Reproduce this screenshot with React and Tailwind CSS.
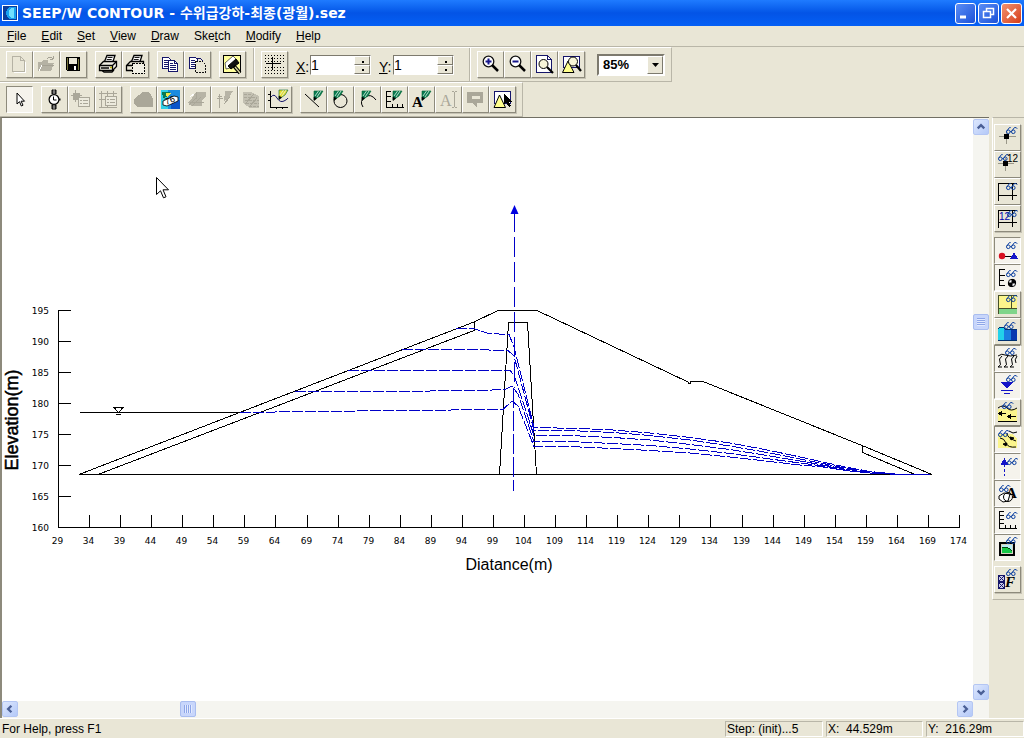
import { useState } from 'react'

// ---------- shared icon bits ----------

function Glyph({ children }) {
  return (
    <svg width="21" height="21" viewBox="0 0 21 21" fill="none" stroke="#000" shapeRendering="crispEdges" className="block shrink-0" aria-hidden="true">
      {children}
    </svg>
  )
}

// the little pair of spectacles that marks every "view" toggle
function Specs({ x = 9, y = 0 }) {
  return (
    <g transform={`translate(${x} ${y})`} stroke="#0b3fa0" strokeWidth="1" fill="none" shapeRendering="auto">
      <ellipse cx="2.3" cy="4.8" rx="1.8" ry="1.8" />
      <ellipse cx="7.3" cy="4.8" rx="1.8" ry="1.8" />
      <path d="M.6 4.4 3.400.6h1.300M5.600 4.400 8.400.6h1.800l1 1.200M4.100 4.600h1.400" />
    </g>
  )
}

function Pencil({ x = 0, y = 0, color = '#0a7a50' }) {
  return (
    <g transform={`translate(${x} ${y})`} shapeRendering="auto">
      <path d="M0 0h9L6 5 0 9Z" fill={color} stroke="#063" strokeWidth=".6" />
      <path d="m1 5 3.500-5M3 6l4-6" stroke="#dff5e6" strokeWidth=".8" />
      <path d="M0 9.500V6l2.500 1.600Z" fill="#000" stroke="#000" strokeWidth=".6" />
    </g>
  )
}

const icons = {
  newFile: (
    <g stroke="#b5b2a4">
      <path d="M3.500 2.500h8l4 4v11h-12zM11.500 2.500v4h4" />
      <path d="M4.500 18.500h12v-11" stroke="#fff" />
    </g>
  ),
  open: (
    <g>
      <path d="M2 8h4l1-2h5v3h6l-3 8H2z" fill="#b5b2a4" stroke="none" />
      <path d="M11 5q3-4 6 0m0 0v-3m0 3h-3M5 11.500h13" stroke="#a5a294" />
      <path d="m3 17 3-6" stroke="#fff" />
    </g>
  ),
  save: (
    <g>
      <path d="M3 3h14v14H4l-1-1z" fill="#000" stroke="none" />
      <path d="M6 4h8v6H6z" fill="#e9e6d6" stroke="none" />
      <path d="M4.500 4v12M15.500 5v11" stroke="#77753a" />
      <path d="M11 12h2v4h-2z" fill="#fff" stroke="none" />
    </g>
  ),
  print: (
    <g shapeRendering="auto" strokeWidth="1.300">
      <path d="M6.500 7.500 9 1.500h8l-2 6" fill="#fff" />
      <path d="M9.500 3.500h5M8.700 5.500h5" strokeWidth=".9" />
      <path d="m1.500 11.500 4-4h13v5l-4 4h-13z" fill="#f1efe4" />
      <path d="M1.500 11.500h13v5m0-5 4-4M3 14h8M4 16.500l2 1.500h8l2-2" />
      <path d="M12 13.500h2" stroke="#b8b000" />
    </g>
  ),
  printArea: (
    <g>
      <g shapeRendering="auto" strokeWidth="1.300">
        <path d="M6.500 7.500 9 1.500h8l-2 6" fill="#fff" />
        <path d="M9.500 3.500h5M8.700 5.500h5" strokeWidth=".9" />
        <path d="M7 16.500H1.500v-5l4-4h13v3M1.500 11.500H7" />
      </g>
      <path d="M7.500 9.500h12v10h-12z" strokeDasharray="2 1" fill="#f1efe4" />
    </g>
  ),
  copy: (
    <g stroke="#15156a">
      <path d="M2.500 3.500h6l2 2v9h-8z" fill="#fff" />
      <path d="M4 6.500h4M4 8.500h5M4 10.500h5M4 12.500h5" />
      <path d="M8.500 6.500h6l3 3v8h-9z" fill="#fff" />
      <path d="M14.500 6.500v3h3M10 9.500h3M10 11.500h6M10 13.500h6M10 15.500h6" />
    </g>
  ),
  copyArea: (
    <g stroke="#15156a">
      <path d="M2.500 3.500h6l2 2v9h-8z" fill="#fff" />
      <path d="M4 6.500h4M4 8.500h5M4 10.500h5M4 12.500h5" />
      <path d="M8.500 7.500h7l3 3v8h-10z" fill="#e9e6d6" stroke="#111" strokeDasharray="2 1" />
      <path d="M8.500 4.500h5l3 3" />
    </g>
  ),
  paint: (
    <g>
      <path d="M1.500 1.500h17v17h-17z" fill="#ffff9c" />
      <g shapeRendering="auto">
        <path d="m3 9 8-7 4 4-7 8-4 1z" fill="#fff" strokeWidth=".6" />
        <path d="m6 12 8-7 3 4-8 6z" fill="#111" />
        <path d="m12 12 6 7" strokeWidth="3.500" />
        <path d="m13 13 5 6" stroke="#d9d6a0" strokeWidth="1.300" />
      </g>
    </g>
  ),
  grid: (
    <g>
      <path d="M1 1.500h19M1 4.500h19M1 7.500h19M1 13.500h19M1 16.500h19M1 19.500h19" strokeDasharray="1 2" />
      <path d="M2 9.500h15M8.500 3v13" />
    </g>
  ),
  pointer: (
    <path d="M8 4v11l2.500-2.300L12.300 17l1.700-.8-1.900-4H15.500z" fill="#fff" shapeRendering="auto" />
  ),
  watch: (
    <g shapeRendering="auto">
      <path d="M8 1h4v4H8zM8 16h4v4H8z" fill="#444" />
      <path d="M10 0v20" stroke="#ccc" strokeWidth=".8" />
      <circle cx="10" cy="10.500" r="4.900" fill="#fff" strokeWidth="1.200" />
      <path d="M9.500 7.500v3.500h3" />
      <path d="M15 10.500h1.500" strokeWidth="2" />
    </g>
  ),
  nodeList: (
    <g stroke="#aaa799">
      <path d="M2 4h6v6H2z" fill="#aaa799" />
      <path d="M4.500 1v12M0 6.500h11" />
      <path d="M7.500 8.500h11v9h-11z" fill="#eceadd" />
      <path d="M9 11.500h2m1 0h5m-8 3h2m1 0h5" />
    </g>
  ),
  gridList: (
    <g stroke="#aaa799">
      <path d="M1 4.500h18M1 10.500h8M3.500 2v16M9.500 2v16M15.500 2v6" />
      <path d="M7.500 7.500h11v9h-11z" fill="#eceadd" />
      <path d="M9 10.500h2m1 0h5m-8 3h2m1 0h5M1 18.500h18" />
    </g>
  ),
  region: (
    <path d="M1 10 6 6l3-3h6l3 3 2 4v8H4l-3-4z" fill="#aaa799" stroke="none" />
  ),
  contourNum: (
    <g>
      <path d="M1 1h19v19H1z" fill="#1a8be0" stroke="none" />
      <path d="M1 1h7v19H1z" fill="#30cfe6" stroke="none" />
      <path d="M11 11h9v9h-9z" fill="#0b55c8" stroke="none" />
      <path d="M2 3h8l-3 5-4 1z" fill="#0a7a50" stroke="none" />
      <path d="M6 4h5l-4 5z" fill="#f2e94b" stroke="none" />
      <g shapeRendering="auto">
        <path d="m3 12 11-5 4 1v4L7 17l-4-1z" fill="#fff" strokeWidth=".8" />
        <text x="5" y="15" fontSize="9" fontFamily="Liberation Sans" stroke="none" fill="#000" transform="rotate(-22 8 12)">76</text>
      </g>
    </g>
  ),
  shade1: (
    <g stroke="#aaa799">
      <path d="M9 3h10v5l-4 3v6H4l-3-4 4-4z" fill="#b7b4a6" stroke="none" />
      <path d="m2 16 8-8m-5 9 9-9M9 3v7m-6 3h14" />
      <path d="m3 8 4-3" stroke="#fff" />
    </g>
  ),
  shade2: (
    <g stroke="#aaa799">
      <path d="M5.500 19V8M3 9.500h6M4 7.500h4M5.500 5v3" />
      <path d="M11 2h8l-3 5-4 4-2 1z" fill="#b7b4a6" stroke="none" />
      <path d="m10 15 6-7" />
    </g>
  ),
  shade3: (
    <g stroke="#aaa799">
      <path d="M2 3h8l8 4v12H9l-7-5z" fill="#c3c0b2" stroke="none" />
      <path d="M3 5h8M3 8h13M4 11h14M5 14h13M8 17h10" strokeDasharray="3 1" />
      <path d="m4 15 9-10M9 17l7-8" />
    </g>
  ),
  graph: (
    <g>
      <path d="M2.500 2v17M2 18.500h18" />
      <path d="M0 5.500h3M0 11.500h3M8.500 18v2M14.500 18v2" />
      <g shapeRendering="auto">
        <path d="M3 8q3-4 6 1t7 3 4-3" stroke="#15156a" />
        <Pencil x={11} y={1} color="#e8dc30" />
      </g>
    </g>
  ),
  line: (
    <g shapeRendering="auto">
      <path d="m2 5 14 13" />
      <Pencil x={11} y={2} />
    </g>
  ),
  circle: (
    <g shapeRendering="auto">
      <circle cx="10.500" cy="12" r="6.500" />
      <Pencil x={4} y={2} />
    </g>
  ),
  arc: (
    <g shapeRendering="auto">
      <path d="M6 18Q2 12 8 8t11 3" />
      <Pencil x={5} y={2} />
    </g>
  ),
  axes: (
    <g>
      <path d="M2.500 2v17M2 18.500h18M3 2.500h4M3 7.500h4M3 12.500h4M8.500 18v-3M13.500 18v-3M18.500 18v-3" />
      <Pencil x={9} y={2} />
    </g>
  ),
  text: (
    <g>
      <text x="1" y="18" fontSize="15" fontFamily="Liberation Serif" fontWeight="700" stroke="none" fill="#000">A</text>
      <Pencil x={11} y={2} />
    </g>
  ),
  textEdit: (
    <g stroke="#aaa799">
      <text x="2" y="17" fontSize="16" fontFamily="Liberation Serif" stroke="none" fill="#aaa799">A</text>
      <path d="M16.500 3v15M14 2.500h2M17 2.500h2M14 18.500h2M17 18.500h2" />
    </g>
  ),
  note: (
    <g>
      <path d="M2 3h16v11h-6v5l-4-5H2z" fill="#aaa799" stroke="none" />
      <path d="M7 7h8v3H7z" fill="#e9e6d6" stroke="none" />
    </g>
  ),
  modify: (
    <g>
      <path d="M2.500 2.500h16v12h-16z" fill="#fff" stroke="#15156a" />
      <path d="M2 18.500 7.500 6l6 12.500z" fill="#ffff8c" shapeRendering="auto" />
      <path d="M12 5v10l2-2 3 5 2-1-2-4h3z" fill="#000" stroke="none" />
    </g>
  ),
  zoomIn: (
    <g shapeRendering="auto">
      <circle cx="8.500" cy="7.500" r="5.300" fill="#fff" stroke="#111" strokeWidth="1.300" />
      <path d="M5.500 7.500h6M8.500 4.500v6" stroke="#15158a" strokeWidth="2" />
      <path d="m12 11 6 6" strokeWidth="2.500" />
    </g>
  ),
  zoomOut: (
    <g shapeRendering="auto">
      <circle cx="8.500" cy="7.500" r="5.300" fill="#fff" stroke="#111" strokeWidth="1.300" />
      <path d="M5.500 7.500h6" stroke="#15158a" strokeWidth="2" />
      <path d="m12 11 6 6" strokeWidth="2.500" />
    </g>
  ),
  zoomPage: (
    <g>
      <path d="M2.500 1.500h11l4 4v13h-15z" fill="#fff" stroke="#15156a" />
      <path d="M13.500 1.500v4h4" stroke="#15156a" />
      <g shapeRendering="auto">
        <circle cx="9.500" cy="10" r="4.500" fill="#f8f6d8" />
        <path d="m13 13 6 6" strokeWidth="2.200" />
      </g>
    </g>
  ),
  zoomObjects: (
    <g>
      <path d="M2.500 2.500h16v11h-16z" fill="#fff" stroke="#15156a" />
      <g shapeRendering="auto">
        <path d="M1.500 18.500 7 7l6 11.500z" fill="#ffff8c" />
        <circle cx="12" cy="7.500" r="4.500" fill="#f8f6d8" />
        <path d="m15 11 5 6" strokeWidth="2.200" />
      </g>
    </g>
  ),

  // side toggles
  node: (
    <g>
      <path d="M2 9.500h17M9.500 4v13" stroke="#9a9788" />
      <path d="M7 7h5v5H7z" fill="#000" stroke="none" />
      <Specs />
    </g>
  ),
  nodeNum: (
    <g>
      <path d="M1 9.500h16M8.500 4v13" stroke="#9a9788" />
      <path d="M6 7h5v5H6z" fill="#000" stroke="none" />
      <Specs x={1} />
      <text x="10" y="8" fontSize="10" fontFamily="Liberation Sans" stroke="none" fill="#000">12</text>
    </g>
  ),
  element: (
    <g>
      <path d="M1.500 20V2.500h18M1 14.500h19M15.500 3v16" />
      <Specs x={9} y={2} />
    </g>
  ),
  elementNum: (
    <g>
      <path d="M1.500 20V2.500h18M1 14.500h19M15.500 3v16" />
      <text x="2" y="12" fontSize="10" fontFamily="Liberation Sans" stroke="none" fill="#0000b0">12</text>
      <Specs x={10} y={2} />
    </g>
  ),
  boundary: (
    <g>
      <Specs x={9} y={2} />
      <path d="M5 16.500h11" />
      <circle cx="5" cy="16" r="3.200" fill="#d81020" stroke="none" shapeRendering="auto" />
      <path d="m17 12 4 7h-8z" fill="#1414c8" stroke="none" />
    </g>
  ),
  flux: (
    <g>
      <path d="M2.500 2v17M3 2.500h5M3 8.500h5M3 13.500h4M3 18.500h5" />
      <Specs x={9} y={3} />
      <g shapeRendering="auto">
        <circle cx="15" cy="16" r="3.700" fill="#fff" />
        <path d="M15 16v-3.700A3.700 3.700 0 0 1 18.700 16zM15 16v3.700A3.700 3.700 0 0 1 11.300 16z" fill="#000" />
      </g>
    </g>
  ),
  materials: (
    <g>
      <path d="M1 1h19v13H1z" fill="#fbf58c" stroke="none" />
      <path d="M1 15h19v5H1z" fill="#7fd58a" stroke="none" />
      <path d="M1.500 20V1.500h18M1 14.500h19M14.500 2v13" stroke="#45502a" />
      <Specs x={9} y={1} />
    </g>
  ),
  shading: (
    <g>
      <path d="M1 8q4-4 7 0 4 2 12 0v12H1z" fill="#1a7fe0" stroke="none" />
      <path d="M1 8q4-3 6 0v12H1z" fill="#22d2ea" stroke="none" />
      <path d="M14 9h6v11h-6z" fill="#0a38b0" stroke="none" />
      <path d="M1 8q4-4 7 0 4 2 12 0M1 19.500h19" stroke="#003070" />
      <Specs x={7} y={1} />
    </g>
  ),
  contours: (
    <g shapeRendering="auto">
      <path d="M1 8q4-3 7-1 5 2 12 0" />
      <path d="M5 8q-4 3-2 6t-2 5h4M11 8q-4 3-2 6t-2 5h4M17 8q-4 3-2 6t-2 5h4M20 8q-3 4-1 7" />
      <Specs x={8} y={0} />
    </g>
  ),
  waterTable: (
    <g>
      <Specs x={9} y={0} />
      <path d="M4 7h12l-6 7z" fill="#1414c8" stroke="none" />
      <path d="M4 15.500h12M7 18.500h6" stroke="#1414c8" />
    </g>
  ),
  vectors: (
    <g>
      <path d="M1 7h19v12H1z" fill="#fbf58c" stroke="none" />
      <path d="M1 6q5-4 9 0t10 0M1 19.500h19" shapeRendering="auto" />
      <path d="M3 11.500h6M12 14.500h7" />
      <path d="m1 11.500 4-3v6zM10 14.500l4-3v6z" fill="#000" stroke="none" />
      <Specs x={5} y={0} />
    </g>
  ),
  paths: (
    <g>
      <path d="M1 5h14l5 5v9H1z" fill="#fbf58c" stroke="none" />
      <g shapeRendering="auto">
        <path d="M3 9q4 0 6 5t10 4M10 4q0 5 9 8M12 2l4 2 4-1" />
        <path d="m6 15 4-1-1 3zM13 8l4 1-3 2z" fill="#000" />
      </g>
      <Specs x={1} y={1} />
    </g>
  ),
  section: (
    <g>
      <path d="M7.500 8v12" stroke="#1414c8" strokeDasharray="3 2" />
      <path d="m7.500 2 4 7h-8z" fill="#1414c8" stroke="none" />
      <Specs x={10} y={2} />
    </g>
  ),
  sketchText: (
    <g>
      <text x="9" y="15" fontSize="15" fontFamily="Liberation Serif" fontWeight="700" stroke="none" fill="#000">A</text>
      <g shapeRendering="auto">
        <path d="m2 13 5-3 6 1-2 7-5 1-4-3z" fill="#fff" />
        <circle cx="11" cy="14" r="4.500" />
      </g>
      <Specs x={2} y={2} />
    </g>
  ),
  axesView: (
    <g>
      <path d="M2.500 1v18M2 18.500h18M3 1.500h4M3 5.500h4M3 9.500h4M3 13.500h4M8.500 18v-3M13.500 18v-3M18.500 18v-3" />
      <Specs x={9} y={2} />
    </g>
  ),
  picture: (
    <g>
      <path d="M2 5h16v14H2z" fill="#000" stroke="none" />
      <path d="M4 7h12v10H4z" fill="#d7d4c0" stroke="none" />
      <path d="M5 8h10v8H5z" fill="#18c848" stroke="none" />
      <path d="M5 8h10v6q-3-4-10-3z" fill="#b9ecf5" stroke="none" />
      <path d="M5 11q6-2 10 3" stroke="#03480f" />
      <Specs x={9} y={0} />
    </g>
  ),
  fonts: (
    <g>
      <path d="M1.500 6.500h6v6h-6zM1.500 13.500h6v6h-6z" fill="#c9cbe8" stroke="#15156a" />
      <path d="m2 7 5 5m0-5-5 5m0 2 5 5m0-5-5 5" stroke="#15156a" />
      <text x="8" y="18" fontSize="15" fontFamily="Liberation Serif" fontStyle="italic" fontWeight="700" stroke="none" fill="#000">F</text>
      <Specs x={9} y={0} />
    </g>
  ),
}

// ---------- controls ----------

const RAISED = 'border-t-white border-l-white border-r-[#8d8a7c] border-b-[#8d8a7c] shadow-[1px_1px_0_#c5c2b4] bg-[#e9e6d6]'
const PRESSED = 'border-t-[#8d8a7c] border-l-[#8d8a7c] border-r-white border-b-white bg-[#f5f3ec]'

function ToolButton({ icon, label, pressed = false, disabled = false }) {
  return (
    <button
      type="button"
      aria-label={label}
      disabled={disabled}
      className={`flex h-[27px] w-[27px] shrink-0 items-center justify-center border ${pressed ? PRESSED : RAISED}`}
    >
      <Glyph>{icons[icon]}</Glyph>
    </button>
  )
}

function ButtonGroup({ items }) {
  return (
    <div className="flex">
      {items.map((item) => (
        <ToolButton key={item.label} {...item} />
      ))}
    </div>
  )
}

function Spinner({ id, label, value, onChange }) {
  return (
    <div className="flex items-center">
      <label htmlFor={id} className="mt-1 w-[14px] text-[14px] leading-4">
        <u>{label}</u>:
      </label>
      <div className="flex h-5 w-[61px] border border-t-[#7d7a6e] border-l-[#7d7a6e] border-r-white border-b-white bg-white">
        <input
          id={id}
          value={value}
          onChange={(e) => onChange(e.target.value)}
          className="w-11 min-w-0 text-[14px] leading-4 outline-none"
        />
        <div className="flex w-4 flex-col">
          <SpinButton label={`Increase ${label}`} d="M5 4h1v1H5z" />
          <SpinButton label={`Decrease ${label}`} d="M5 3h1v1H5z" />
        </div>
      </div>
    </div>
  )
}

function SpinButton({ label, d }) {
  return (
    <button
      type="button"
      aria-label={label}
      className="flex flex-1 items-center justify-center border border-t-white border-l-white border-r-[#7d7a6e] border-b-[#7d7a6e] bg-[#e9e6d6]"
    >
      <svg width="11" height="7" viewBox="0 0 11 7" shapeRendering="crispEdges">
        <path d={d} stroke="#000" />
      </svg>
    </button>
  )
}

function Divider() {
  return <div className="-mx-px w-px self-stretch bg-[#b9b6a8] shadow-[1px_0_0_#fff]" />
}

const chevrons = {
  up: 'm4 9 3.500-3.500L11 9',
  down: 'm4 6 3.500 3.500L11 6',
  left: 'M9 4 5.500 7.500 9 11',
  right: 'm6 4 3.500 3.500L6 11',
}

function ScrollArrow({ dir }) {
  return (
    <button
      type="button"
      aria-label={`Scroll ${dir}`}
      className="h-4 w-4 shrink-0 rounded-xs border border-[#b4c6f3] bg-gradient-to-br from-[#dde7fd] to-[#b4c9f8]"
    >
      <svg width="14" height="14" viewBox="0 0 15 15" fill="none">
        <path d={chevrons[dir]} stroke="#4a5f96" strokeWidth="2.500" />
      </svg>
    </button>
  )
}

function CaptionButton({ label, close = false, children }) {
  return (
    <button
      type="button"
      aria-label={label}
      className={`flex h-[21px] w-[21px] items-center justify-center rounded-[3px] border border-white ${
        close ? 'bg-gradient-to-br from-[#f0906f] to-[#d63a10]' : 'bg-gradient-to-br from-[#5b8df5] to-[#1c50d8]'
      }`}
    >
      <svg width="17" height="17" viewBox="0 0 17 17" fill="none" stroke="#fff">
        {children}
      </svg>
    </button>
  )
}

// ---------- tool bars ----------

const fileTools = [
  [
    { icon: 'newFile', label: 'New', disabled: true },
    { icon: 'open', label: 'Open', disabled: true },
    { icon: 'save', label: 'Save' },
  ],
  [
    { icon: 'print', label: 'Print' },
    { icon: 'printArea', label: 'Print selection' },
  ],
  [
    { icon: 'copy', label: 'Copy all' },
    { icon: 'copyArea', label: 'Copy selection' },
  ],
  [{ icon: 'paint', label: 'Redraw' }],
]

const zoomTools = [
  { icon: 'zoomIn', label: 'Zoom in' },
  { icon: 'zoomOut', label: 'Zoom out' },
  { icon: 'zoomPage', label: 'Zoom page' },
  { icon: 'zoomObjects', label: 'Zoom objects' },
]

const drawTools = [
  [{ icon: 'pointer', label: 'Default mode', pressed: true }],
  [
    { icon: 'watch', label: 'View time increments' },
    { icon: 'nodeList', label: 'View node information', disabled: true },
    { icon: 'gridList', label: 'View element information', disabled: true },
  ],
  [
    { icon: 'region', label: 'Draw contours', disabled: true },
    { icon: 'contourNum', label: 'Draw contour labels' },
    { icon: 'shade1', label: 'Draw flow paths', disabled: true },
    { icon: 'shade2', label: 'Draw flux labels', disabled: true },
    { icon: 'shade3', label: 'Draw vectors', disabled: true },
    { icon: 'graph', label: 'Draw graph' },
  ],
  [
    { icon: 'line', label: 'Sketch lines' },
    { icon: 'circle', label: 'Sketch circles' },
    { icon: 'arc', label: 'Sketch arcs' },
    { icon: 'axes', label: 'Sketch axes' },
    { icon: 'text', label: 'Sketch text' },
    { icon: 'textEdit', label: 'Modify text', disabled: true },
    { icon: 'note', label: 'Modify pictures', disabled: true },
    { icon: 'modify', label: 'Modify objects' },
  ],
]

const viewTools = [
  [
    { icon: 'node', label: 'Nodes' },
    { icon: 'nodeNum', label: 'Node numbers' },
    { icon: 'element', label: 'Elements' },
    { icon: 'elementNum', label: 'Element numbers' },
  ],
  [
    { icon: 'boundary', label: 'Boundary conditions', pressed: true },
    { icon: 'flux', label: 'Flux sections', pressed: true },
    { icon: 'materials', label: 'Material colors' },
    { icon: 'shading', label: 'Contour shading' },
    { icon: 'contours', label: 'Contour lines', pressed: true },
    { icon: 'waterTable', label: 'Water table', pressed: true },
    { icon: 'vectors', label: 'Vectors' },
    { icon: 'paths', label: 'Flow paths', pressed: true },
    { icon: 'section', label: 'Section lines', pressed: true },
    { icon: 'sketchText', label: 'Sketch objects', pressed: true },
    { icon: 'axesView', label: 'Axes', pressed: true },
    { icon: 'picture', label: 'Pictures', pressed: true },
  ],
  [{ icon: 'fonts', label: 'Font preferences' }],
]

// [before, underlined, after]
const menus = [
  ['', 'F', 'ile'],
  ['', 'E', 'dit'],
  ['', 'S', 'et'],
  ['', 'V', 'iew'],
  ['', 'D', 'raw'],
  ['Ske', 't', 'ch'],
  ['', 'M', 'odify'],
  ['', 'H', 'elp'],
]

function TitleBar() {
  return (
    <header className="flex h-[26px] shrink-0 items-center gap-1 bg-gradient-to-b from-[#1f7bff] via-[#0454e6] to-[#0560f5] px-[2px]">
      <svg width="16" height="16" viewBox="0 0 16 16" shapeRendering="crispEdges" aria-hidden="true">
        <path d="M0 0h16v16H0z" fill="#fff" />
        <path d="M1 1h14v14H1z" fill="#0a3c9c" />
        <path d="M7 2h7v12H7q-6-6 0-12z" fill="#18a0f0" />
        <path d="M9 3h3v10H9q-4-5 0-10z" fill="#70e0ff" />
      </svg>
      <h1 className="flex-1 truncate font-['DejaVu_Sans','Noto_Sans_CJK_KR',sans-serif] text-[14px] leading-5 font-bold text-white">
        SEEP/W CONTOUR - 수위급강하-최종(광월).sez
      </h1>
      <div className="flex gap-[2px]">
        <CaptionButton label="Minimize">
          <path d="M3 12h6" strokeWidth="3" />
        </CaptionButton>
        <CaptionButton label="Restore">
          <path d="M6.500 6V3.500h7v6H11" strokeWidth="1.500" />
          <path d="M3.500 6.500h7v6h-7z" strokeWidth="1.500" />
        </CaptionButton>
        <CaptionButton label="Close" close>
          <path d="m4 4 9 9m0-9-9 9" strokeWidth="2.200" />
        </CaptionButton>
      </div>
    </header>
  )
}

function Toolbars() {
  const [x, setX] = useState('1')
  const [y, setY] = useState('1')
  const bar = 'flex items-center gap-2 border-t border-r border-b border-t-white border-r-[#b9b6a8] border-b-[#b9b6a8] h-[35px] pl-[6px] pr-[6px]'

  return (
    <div className="flex flex-col items-start">
      <div className={bar}>
        {fileTools.map((items) => (
          <ButtonGroup key={items[0].label} items={items} />
        ))}
        <Divider />
        <ToolButton icon="grid" label="Snap to grid" />
        <Spinner id="grid-x" label="X" value={x} onChange={setX} />
        <div className="flex items-center gap-4 self-stretch">
          <Spinner id="grid-y" label="Y" value={y} onChange={setY} />
          <Divider />
        </div>
        <ButtonGroup items={zoomTools} />
        <div className="relative ml-1 h-[22px] w-[68px] border-2 border-t-[#7d7a6e] border-l-[#7d7a6e] border-r-white border-b-white bg-white">
          <select
            aria-label="Zoom"
            defaultValue="85%"
            className="block h-[18px] w-full appearance-none py-0 pl-1 text-[13px] leading-[18px] font-bold outline-none"
          >
            <option>50%</option>
            <option>85%</option>
            <option>100%</option>
          </select>
          <span className="pointer-events-none absolute top-0 right-0 flex h-[18px] w-4 items-center justify-center border border-t-white border-l-white border-r-[#7d7a6e] border-b-[#7d7a6e] bg-[#e9e6d6]">
            <svg width="7" height="4" viewBox="0 0 7 4">
              <path d="M0 0h7L3.500 4z" />
            </svg>
          </span>
        </div>
      </div>
      <div className={bar}>
        {drawTools.map((items) => (
          <ButtonGroup key={items[0].label} items={items} />
        ))}
      </div>
    </div>
  )
}

// ---------- drawing ----------

const xTicks = Array.from({ length: 30 }, (_, i) => 29 + i * 5)
const yTicks = Array.from({ length: 8 }, (_, i) => 160 + i * 5)
const toX = (m) => Math.round(58 + (m - 29) * 6.214) + 0.5
const toY = (m) => Math.round(527 - (m - 160) * 6.2) + 0.5

// phreatic surface for each time step, upstream face to downstream toe
const phreatic = [
  'M456 328.500H474L488 333.500 509 334.500 514 347 534 427.500 580 428.500 613 430 650 433 690 437.500 730 443 770 450.500 800 457 823 462 845 467 870 471.500 900 474.500',
  'M402 349.500H470L508 350.500 514 356 534 430.500 580 431 613 432.500 650 435.500 690 440 730 446 770 453 800 459 823 463.500 845 468 870 472 900 474.500',
  'M348 370.500H510L514 375 534 435.500 580 436 613 437.500 650 440 690 444.500 730 449.500 770 456 800 461 823 465 845 469 870 472.500 900 474.500',
  'M295 391.500H380L480 390.500 505 389.500 512 386 518 394 534 441.500 580 442 613 443.500 650 445.500 690 449 730 453.500 770 459 800 463 823 466 845 470 870 473 900 474.500',
  'M240 412.500 310 411.500 400 410.500 503 409.500 512 401 518 406 534 446.500 580 447 613 448.500 650 450.500 690 453 730 457 770 461.500 800 465 823 467 845 470.500 870 473 900 474.500',
]

function Drawing() {
  return (
    <svg viewBox="2 118 971 583" preserveAspectRatio="xMinYMin meet" className="h-full w-full min-w-0 flex-1" role="img" aria-label="Dam cross-section">
      <g fill="none" stroke="#000" shapeRendering="crispEdges">
        <path d="M58.500 310V527.500H960" />
        {yTicks.map((m) => (
          <path key={m} d={`M58 ${toY(m)}h13`} />
        ))}
        {xTicks.map((m) => (
          <path key={m} d={`M${toX(m)} 515v12`} />
        ))}
        <path d="M79 474.500H932" />
        <path d="M79 474.500 474 322 498 310.500H537L688 382v1.500h2V381.500H703L862 445.500 932 474.500" />
        <path d="M98 474.500 474 330.500V322" />
        <path d="M499.500 474.500 508.500 322.500H527.500L536.500 474.500" />
        <path d="M862.500 446V452.500L915 474.500" />
        <path d="M80 412.500H240" />
        <path d="M114 407.500h9l-4.500 5zM116 414.500h5" />
      </g>
      <g fill="none" stroke="#0000c8" shapeRendering="crispEdges">
        {phreatic.map((d) => (
          <path key={d} d={d} strokeDasharray="11 2" />
        ))}
        <path d="M514.500 212V388" strokeDasharray="20 5" />
        <path d="M513.500 388V491" strokeDasharray="20 3" />
        <path d="M898 474.500h32" />
      </g>
      <path d="M514.500 205 518.500 214h-8z" fill="#0000e0" />
      <g fontFamily="DejaVu Sans" fontSize="9">
        {yTicks.map((m) => (
          <text key={m} x="49" y={toY(m) + 3} textAnchor="end">
            {m}
          </text>
        ))}
        {xTicks.map((m) => (
          <text key={m} x={toX(m) - 1} y="544" textAnchor="middle">
            {m}
          </text>
        ))}
      </g>
      <text x="509" y="570" textAnchor="middle" fontFamily="Liberation Sans" fontSize="16">
        Diatance(m)
      </text>
      <text transform="translate(18 420) rotate(-90)" textAnchor="middle" fontFamily="Liberation Sans" fontSize="18" stroke="#000" strokeWidth=".5">
        Elevation(m)
      </text>
      <path d="M156.500 177.500v17l4-3.700 3 7 2.500-1-3-7h5.500z" fill="#fff" stroke="#000" />
    </svg>
  )
}

function Viewport() {
  return (
    <main className="flex min-w-0 flex-1 flex-col border-t border-l-2 border-t-[#716f64] border-l-[#8d8a7c] bg-white">
      <div className="flex min-h-0 flex-1">
        <Drawing />
        <div className="flex w-4 shrink-0 flex-col bg-[#f5f5f0] py-px">
          <ScrollArrow dir="up" />
          <div className="grow-[34]" />
          <div className="h-4 rounded-xs border border-[#a9bdf0] bg-[#c8d6fb]">
            <div className="mx-[3px] mt-[3px] h-2 bg-[repeating-linear-gradient(#8ea6e8_0_1px,#e3ebff_1px_2px)]" />
          </div>
          <div className="grow-[67]" />
          <ScrollArrow dir="down" />
        </div>
      </div>
      <div className="flex h-[17px] shrink-0 bg-[#f5f5f0] pr-4">
        <ScrollArrow dir="left" />
        <div className="grow-[35]" />
        <div className="h-4 w-4 rounded-xs border border-[#a9bdf0] bg-[#c8d6fb]">
          <div className="mx-[3px] mt-[3px] h-2 bg-[repeating-linear-gradient(90deg,#8ea6e8_0_1px,#e3ebff_1px_2px)]" />
        </div>
        <div className="grow-[165]" />
        <ScrollArrow dir="right" />
      </div>
    </main>
  )
}

function StatusBar() {
  const cell = 'h-4 border border-t-[#b9b6a8] border-l-[#b9b6a8] border-r-white border-b-white pl-px leading-[14px] whitespace-pre'
  return (
    <footer className="flex h-5 shrink-0 items-center gap-[3px] border-t border-white text-[12px] leading-4">
      <span className="flex-1 pl-[2px]">For Help, press F1</span>
      <span className={`${cell} w-[98px]`}>Step: (init)...5</span>
      <span className={`${cell} w-[97px]`}>X:{'  '}44.529m</span>
      <span className={`${cell} w-[98px]`}>Y:{'  '}216.29m</span>
    </footer>
  )
}

export default function App() {
  return (
    <div className="flex h-screen flex-col overflow-hidden bg-[#e9e6d6] font-['Liberation_Sans','Noto_Sans_CJK_KR',sans-serif] text-black">
      <TitleBar />
      <nav className="flex h-[21px] shrink-0 items-center gap-[15px] border-b border-[#b9b6a8] pl-[7px] text-[12px] leading-4">
        {menus.map(([before, key, after]) => (
          <button type="button" key={key}>
            {before}
            <u>{key}</u>
            {after}
          </button>
        ))}
      </nav>
      <Toolbars />
      <div className="flex min-h-0 flex-1">
        <Viewport />
        <aside className="ml-[3px] flex w-8 shrink-0 flex-col">
          <div className="flex flex-col gap-[5px] border-t border-b border-l border-t-[#b9b6a8] border-b-[#b9b6a8] border-l-white py-[6px] pl-px">
            {viewTools.map((items) => (
              <div key={items[0].label} className="flex flex-col">
                {items.map((item) => (
                  <ToolButton key={item.label} {...item} />
                ))}
              </div>
            ))}
          </div>
        </aside>
      </div>
      <StatusBar />
    </div>
  )
}
